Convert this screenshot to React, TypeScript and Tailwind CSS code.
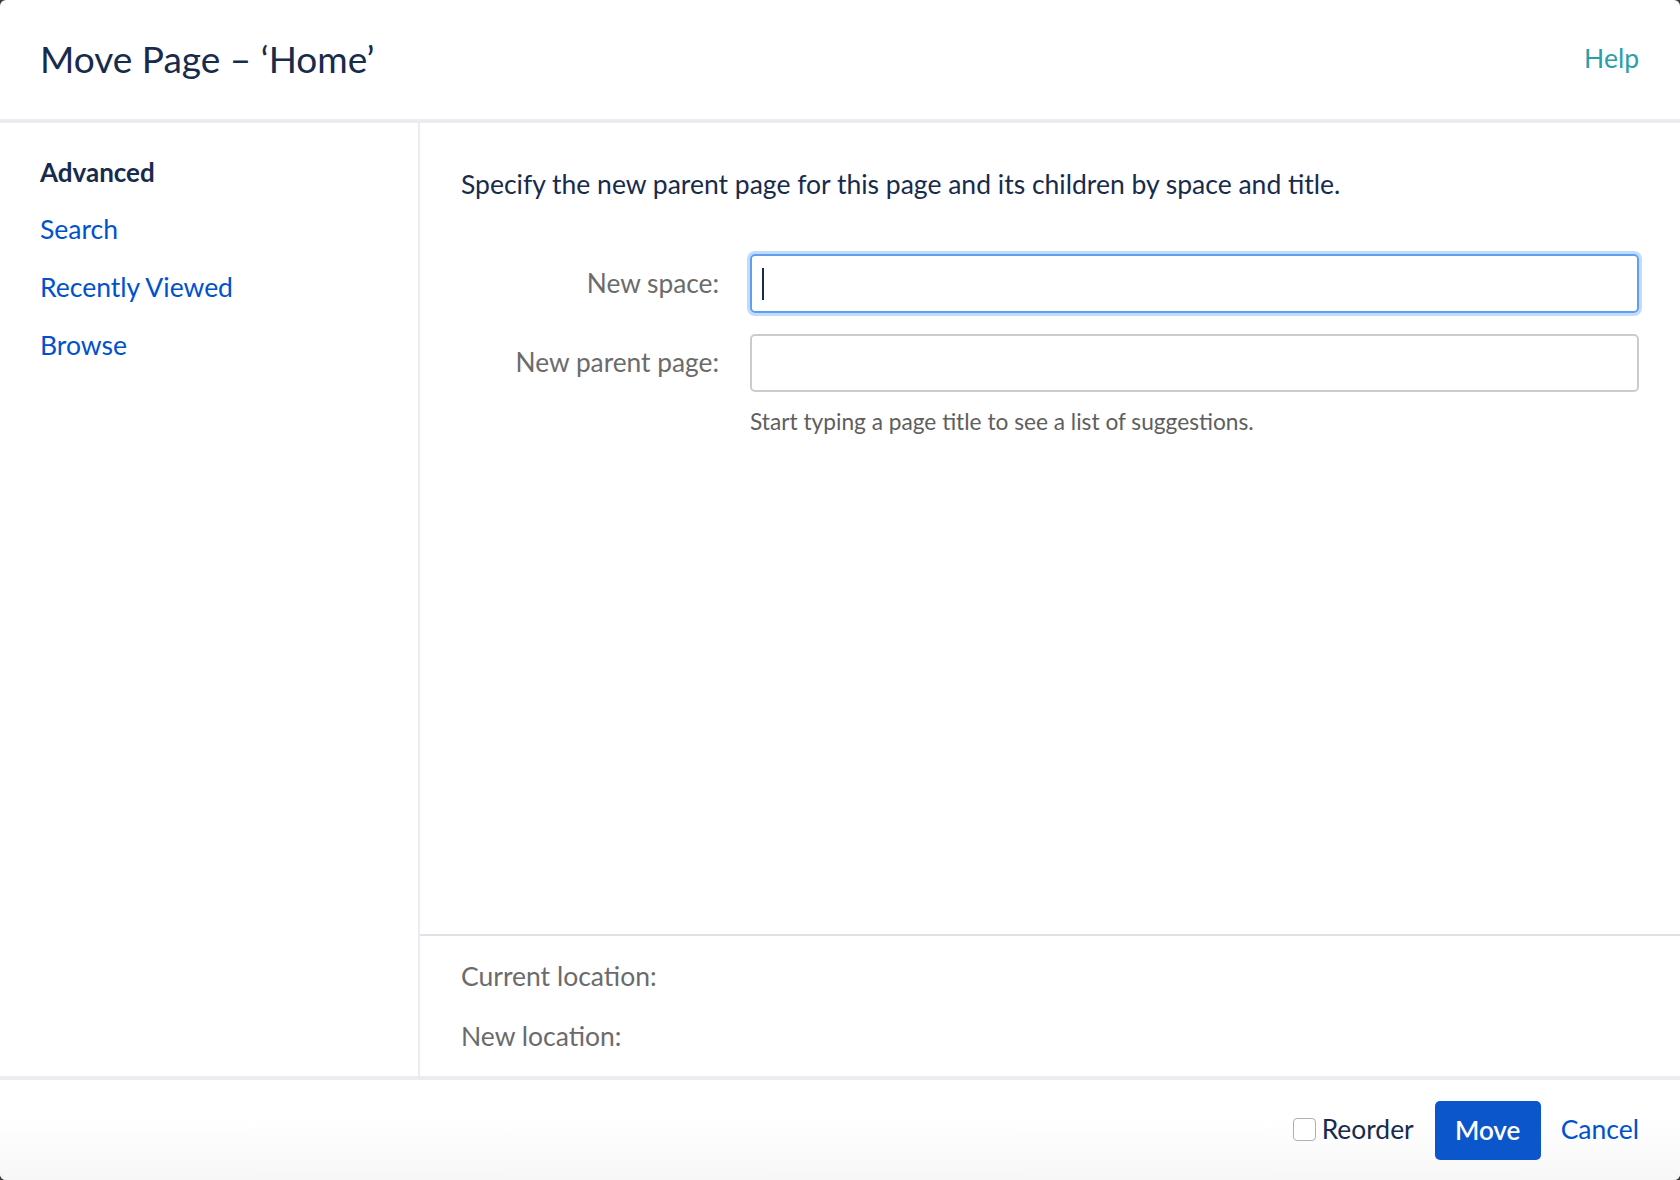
import { useState } from "react";

const navItems = ["Search", "Recently Viewed", "Browse"];

const App = () => {
  const [reorder, setReorder] = useState(false);

  return (
    <div className="w-[1680px] h-[1180px] bg-[#3a3a3a] font-['Lato',sans-serif]">
      <div className="w-full h-full bg-white rounded-[6px] overflow-hidden flex flex-col">
        {/* header */}
        <div className="h-[123px] shrink-0 px-[40px] flex items-center justify-between border-b-[4px] border-[#ebecf0]">
          <h2 className="text-[37px] text-[#172b4d] leading-none pb-[3px]">Move Page – ‘Home’</h2>
          <a className="text-[26.5px] text-[#2a9fac] pb-[2px] mr-[1px]">Help</a>
        </div>

        {/* body */}
        <div className="flex-1 flex min-h-0">
          <div className="w-[420px] shrink-0 border-r-2 border-[#ebecf0] pt-[20px] px-[40px]">
            <div className="h-[58px] flex items-center text-[26px] font-bold text-[#172b4d]">Advanced</div>
            {navItems.map((item) => (
              <div key={item} className="h-[58px] flex items-center text-[26.5px] text-[#0052cc]">
                {item}
              </div>
            ))}
          </div>

          <div className="flex-1 flex flex-col">
            <div className="flex-1 pt-[45px] pl-[41px] pr-[41px]">
              <p className="text-[26.5px] leading-[32px] text-[#172b4d]">
                Specify the new parent page for this page and its children by space and title.
              </p>

              <div className="mt-[54px] grid grid-cols-[258px_1fr] gap-x-[31px] gap-y-[21px] items-center">
                <label className="text-right text-[26.3px] text-[#6b6b6b]">New space:</label>
                <div className="h-[59px] rounded-[5px] border-[2.5px] border-[#5f9ff0] ring-[3px] ring-[#c2dbfb] flex items-center pl-[10px]">
                  <div className="w-[2px] h-[32px] bg-[#172b4d]" />
                </div>
                <label className="text-right text-[26.3px] text-[#6b6b6b]">New parent page:</label>
                <div className="h-[58px] rounded-[5px] border-2 border-[#cccccc]" />
                <div />
                <p className="-mt-[8px] text-[22.7px] text-[#5e5e5e]">
                  Start typing a page title to see a list of suggestions.
                </p>
              </div>
            </div>

            <div className="h-[142px] shrink-0 border-t-2 border-[#dfe1e6] pl-[41px] pt-[24px] flex flex-col gap-[28px]">
              <div className="text-[26.5px] leading-[32px] text-[#6b6b6b]">Current location:</div>
              <div className="text-[26.5px] leading-[32px] text-[#6b6b6b]">New location:</div>
            </div>
          </div>
        </div>

        {/* footer */}
        <div className="h-[104px] shrink-0 border-t-[4px] border-[#ebecf0] bg-gradient-to-b from-white from-40% to-[#f7f7f7] flex items-center justify-end pr-[41px]">
          <label className="flex items-center gap-[6px] text-[26.4px] text-[#172b4d] mr-[21px]">
            <span
              onClick={() => setReorder(!reorder)}
              className="w-[23px] h-[23px] rounded-[4px] border border-[#b0b0b0] bg-white"
            />
            Reorder
          </label>
          <button className="h-[59px] w-[106px] rounded-[5px] bg-[#0c56cc] text-white text-[26px] font-semibold">
            Move
          </button>
          <a className="ml-[20px] text-[26.5px] text-[#0052cc]">Cancel</a>
        </div>
      </div>
    </div>
  );
};

export default App;
